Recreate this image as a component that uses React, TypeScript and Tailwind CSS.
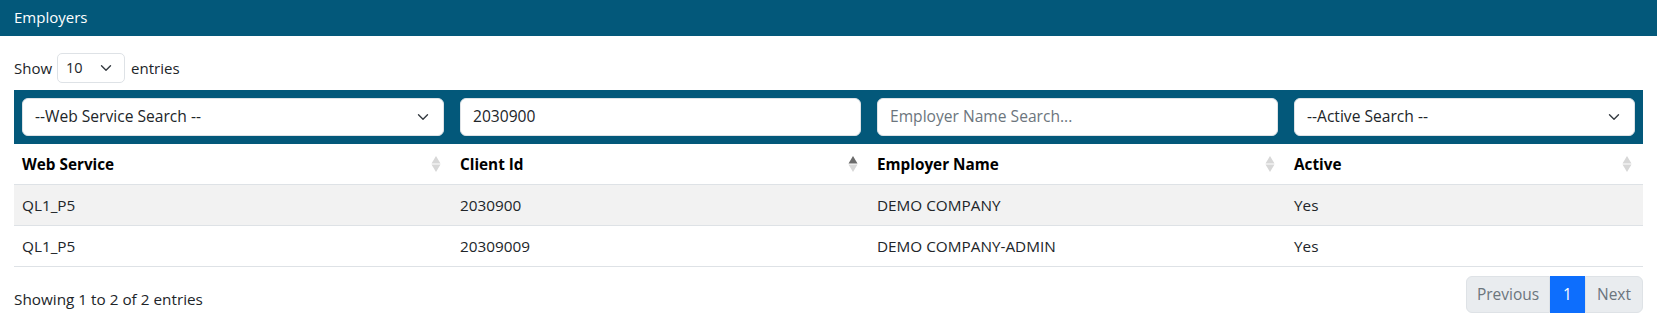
import React from "react";

const font = { fontFamily: '"Segoe UI", "Open Sans", "Noto Sans", sans-serif' };

function Chevron({ className = "" }: { className?: string }) {
  return (
    <svg width="12" height="8" viewBox="0 0 12 8" className={className} fill="none">
      <path d="M1.5 1.75 6 6.25l4.5-4.5" stroke="#343a40" strokeWidth="1.4" strokeLinecap="round" strokeLinejoin="round" />
    </svg>
  );
}

function SortIcon({ active = false }: { active?: boolean }) {
  return (
    <svg width="10" height="18" viewBox="0 0 10 18">
      <path d="M5 1 9.5 8.5h-9z" fill={active ? "#6b6b6b" : "#d7d7d7"} />
      <path d="M5 17 9.5 9.5h-9z" fill="#d7d7d7" />
    </svg>
  );
}

const rows = [
  ["QL1_P5", "2030900", "DEMO COMPANY", "Yes"],
  ["QL1_P5", "20309009", "DEMO COMPANY-ADMIN", "Yes"],
];

export default function App() {
  return (
    <div className="w-[1657px] h-[327px] bg-white text-[#212529]" style={font}>
      <div className="h-[36px] bg-[#03587a] text-white text-[15px] pl-[14px] flex items-center pb-[2px]">
        Employers
      </div>
      <div className="px-[14px]">
        <div className="flex items-center h-[30px] mt-[17px] text-[15px]">
          <span>Show</span>
          <div className="ml-[5px] mr-[6px] w-[68px] h-[30px] border border-[#dee2e6] rounded-[5px] flex items-center justify-between pl-[8px] pr-[12px]">
            <span className="text-[14.5px]">10</span>
            <Chevron />
          </div>
          <span>entries</span>
        </div>
        <div className="mt-[7px] grid grid-cols-[438px_417px_417px_357px] bg-[#03587a] h-[54px] items-center">
          {["--Web Service Search --", "2030900", "Employer Name Search...", "--Active Search --"].map((t, i) => (
            <div key={i} className="px-[8px]">
              <div className="h-[38px] bg-white rounded-[6px] border border-[#dee2e6] flex items-center justify-between pl-[12px] pr-[14px] text-[15.6px]">
                <span className={i === 2 ? "text-[#6c757d]" : "text-[#212529]"}>{t}</span>
                {(i === 0 || i === 3) && <Chevron />}
              </div>
            </div>
          ))}
        </div>
        <div className="grid grid-cols-[438px_417px_417px_357px] h-[41px] items-center border-b border-[#dee2e6] font-bold text-[15.3px] text-black">
          {["Web Service", "Client Id", "Employer Name", "Active"].map((h, i) => (
            <div key={h} className="pl-[8px] pr-[11px] flex items-center justify-between">
              <span>{h}</span>
              <SortIcon active={i === 1} />
            </div>
          ))}
        </div>
        {rows.map((r, ri) => (
          <div
            key={ri}
            className={`grid grid-cols-[438px_417px_417px_357px] h-[41px] items-center border-b border-[#dee2e6] text-[15.3px] ${ri === 0 ? "bg-[#f2f2f2]" : "bg-white"}`}
          >
            {r.map((c, ci) => (
              <div key={ci} className="pl-[8px]">{c}</div>
            ))}
          </div>
        ))}
        <div className="flex items-start justify-between mt-[9px]">
          <span className="text-[15.3px] mt-[12px]">Showing 1 to 2 of 2 entries</span>
          <div className="flex h-[37px] text-[15.5px]">
            <div className="w-[84px] flex items-center justify-center bg-[#e9ecef] border border-[#dee2e6] rounded-l-[6px] text-[#6c757d]">Previous</div>
            <div className="w-[35px] flex items-center justify-center bg-[#0d6efd] text-white">1</div>
            <div className="w-[58px] flex items-center justify-center bg-[#e9ecef] border border-[#dee2e6] rounded-r-[6px] text-[#6c757d]">Next</div>
          </div>
        </div>
      </div>
    </div>
  );
}
